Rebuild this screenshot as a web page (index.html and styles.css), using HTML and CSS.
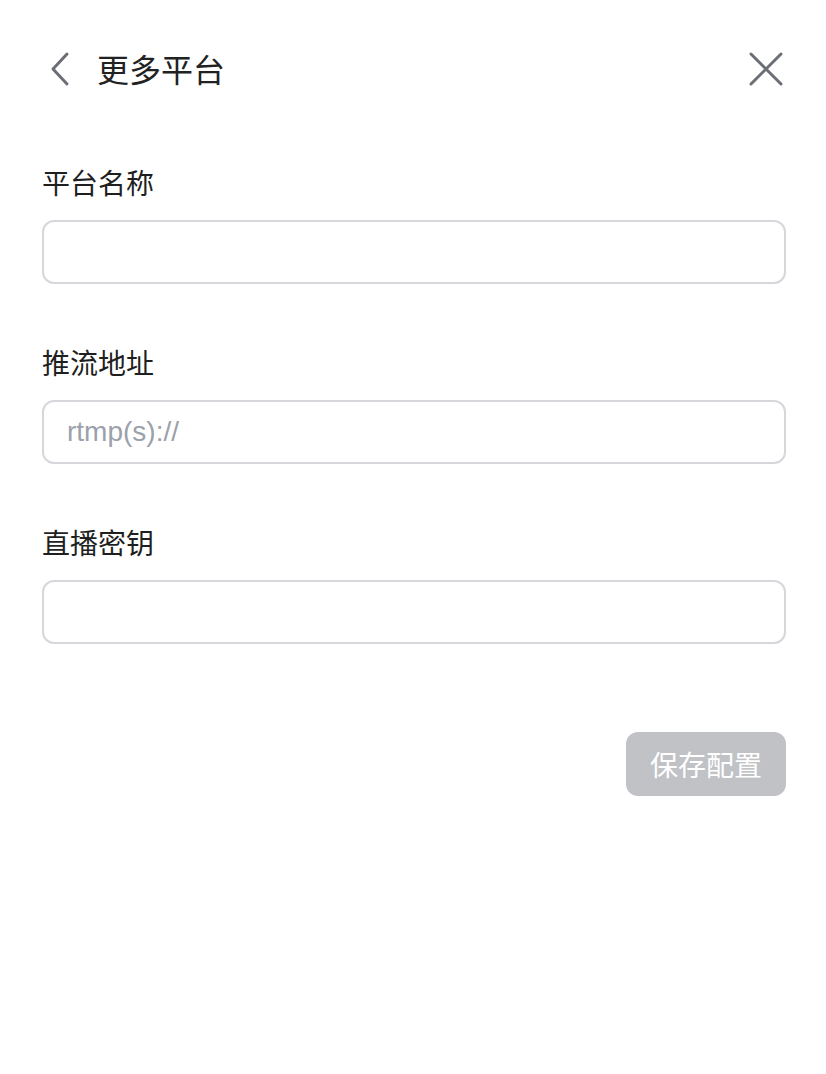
FILE: index.html
```html
<!DOCTYPE html>
<html lang="zh">
<head>
<meta charset="utf-8">
<link rel="stylesheet" href="styles.css">
</head>
<body>
<div class="panel">
  <header class="header">
    <div class="header-left">
      <button class="icon-btn back" aria-label="返回">
        <svg width="24" height="36" viewBox="0 0 24 36"><path d="M19 3 L5 18 L19 33" fill="none" stroke="#6b6e75" stroke-width="3" stroke-linecap="round" stroke-linejoin="round"/></svg>
      </button>
      <h1 class="title">更多平台</h1>
    </div>
    <button class="icon-btn close" aria-label="关闭">
      <svg width="36" height="36" viewBox="0 0 36 36"><path d="M3 3 L33 33 M33 3 L3 33" fill="none" stroke="#6b6e75" stroke-width="3" stroke-linecap="round"/></svg>
    </button>
  </header>
  <form class="form">
    <div class="field">
      <label class="label">平台名称</label>
      <input class="input" type="text">
    </div>
    <div class="field">
      <label class="label">推流地址</label>
      <input class="input" type="text" placeholder="rtmp(s)://">
    </div>
    <div class="field">
      <label class="label">直播密钥</label>
      <input class="input" type="text">
    </div>
    <div class="actions">
      <button type="button" class="save">保存配置</button>
    </div>
  </form>
</div>
</body>
</html>
```
FILE: styles.css
```css
html, body {
  margin: 0;
  padding: 0;
  background: #ffffff;
}
body {
  font-family: "Liberation Sans", "Noto Sans CJK SC", sans-serif;
  color: #1f1f1f;
}
.panel {
  padding: 18px 40px 0 42px;
}
.header {
  height: 100px;
  display: flex;
  align-items: center;
  justify-content: space-between;
}
.header-left {
  display: flex;
  align-items: center;
  gap: 25px;
}
.icon-btn {
  background: none;
  border: none;
  padding: 0;
  display: flex;
  cursor: pointer;
}
.back {
  margin-left: 6px;
  margin-top: 2px;
}
.close {
  margin-right: 2px;
  margin-top: 2px;
}
.title {
  margin: 0;
  font-family: "Noto Sans CJK SC", sans-serif;
  font-weight: 400;
  font-size: 32px;
  line-height: 40px;
  color: #222222;
}
.form {
  margin-top: 44px;
  display: flex;
  flex-direction: column;
}
.field {
  display: flex;
  flex-direction: column;
  gap: 18px;
  margin-bottom: 58px;
}
.label {
  font-family: "Noto Sans CJK SC", sans-serif;
  font-size: 28px;
  line-height: 40px;
  color: #1f1f1f;
}
.input {
  box-sizing: border-box;
  height: 64px;
  width: 100%;
  border: 2px solid #d6d7da;
  border-radius: 12px;
  padding: 0 23px;
  font-family: "Liberation Sans", "Noto Sans CJK SC", sans-serif;
  font-size: 28px;
  color: #1f1f1f;
  outline: none;
}
.input::placeholder {
  color: #9ba1ab;
}
.actions {
  display: flex;
  justify-content: flex-end;
  margin-top: 30px;
}
.save {
  width: 160px;
  height: 64px;
  border: none;
  border-radius: 12px;
  background: #c0c2c6;
  color: #ffffff;
  font-family: "Noto Sans CJK SC", sans-serif;
  font-size: 28px;
}
```
